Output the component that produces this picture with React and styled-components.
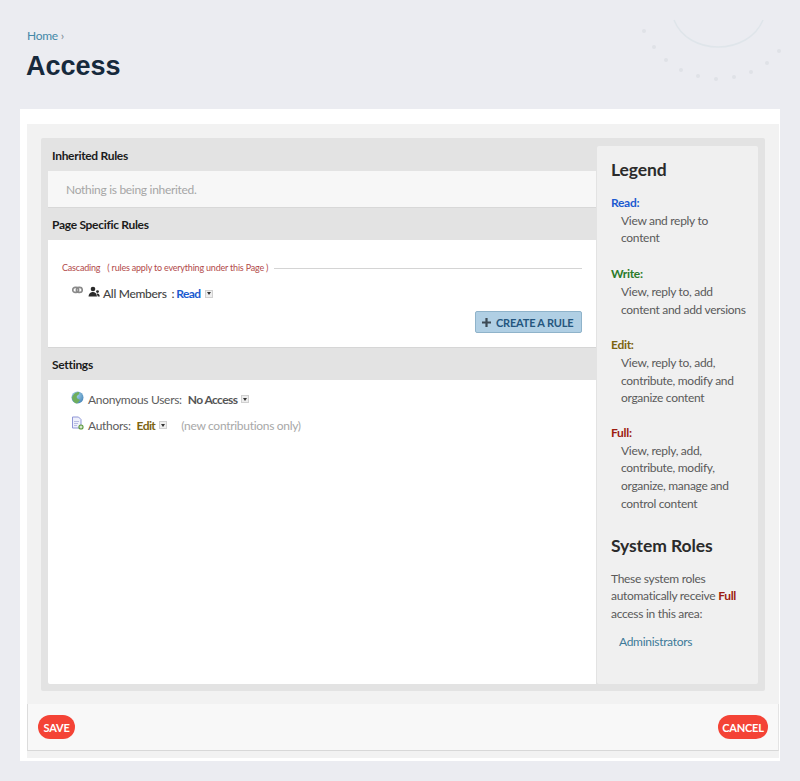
import React from 'react';
import styled, { createGlobalStyle } from 'styled-components';

const GlobalStyle = createGlobalStyle`
  html, body {
    margin: 0;
    padding: 0;
    background: #ebecf1;
    font-family: "Lato", "Noto Sans", sans-serif;
    letter-spacing: -0.3px;
    color: #555;
  }
`;

const Page = styled.div`
  position: relative;
  width: 800px;
  height: 781px;
  overflow: hidden;
  padding: 28px 20px 0;
  box-sizing: border-box;
`;

const Decoration = styled.svg`
  position: absolute;
  top: 0;
  right: 0;
  width: 200px;
  height: 90px;
`;

const Breadcrumb = styled.div`
  padding-left: 7px;
  font-size: 12px;
  line-height: 15px;
  color: #4488a8;
`;

const Separator = styled.span`
  color: #7a8a94;
  margin-left: 3px;
`;

const Title = styled.h1`
  margin: 6px 0 0 6px;
  font-family: "Liberation Sans", Arial, sans-serif;
  font-size: 27px;
  line-height: 34px;
  font-weight: 700;
  letter-spacing: 0;
  color: #16293c;
`;

const Sheet = styled.div`
  margin-top: 26px;
  height: 652px;
  box-sizing: border-box;
  background: #fff;
  padding: 15px 1px 3px 7px;
`;

const Backdrop = styled.div`
  height: 100%;
  background: #f2f2f2;
  padding-top: 14px;
  box-sizing: border-box;
`;

const Frame = styled.div`
  display: flex;
  margin-left: 14px;
  width: 724px;
  height: 553px;
  box-sizing: border-box;
  background: #e3e3e3;
  padding: 0 7px 7px;
  border-radius: 2px;
`;

const Main = styled.div`
  width: 548px;
  display: flex;
  flex-direction: column;
  flex-shrink: 0;
`;

const SectionHeader = styled.div`
  height: ${(p) => p.$height}px;
  box-sizing: border-box;
  display: flex;
  align-items: center;
  margin: 0 -7px;
  padding: ${(p) => p.$top || 0}px 0 0 11px;
  font-size: 12px;
  font-weight: 700;
  color: #1b1b1b;
  flex-shrink: 0;
`;

const InheritedBody = styled.div`
  height: 37px;
  box-sizing: border-box;
  background: #f7f7f7;
  border-bottom: 1px solid #d8d8d8;
  padding-left: 18px;
  display: flex;
  align-items: center;
  font-size: 12px;
  color: #a6a6a6;
`;

const RulesBody = styled.div`
  height: 108px;
  box-sizing: border-box;
  background: #fff;
  border-bottom: 1px solid #d6d6d6;
  padding: 21px 14px 0 14px;
`;

const Cascade = styled.div`
  display: flex;
  align-items: center;
  font-size: 9px;
  letter-spacing: -0.2px;
  line-height: 14px;
  color: #b24a4a;
`;

const CascadeNote = styled.span`
  margin-left: 7px;
`;

const CascadeLine = styled.span`
  flex: 1;
  height: 1px;
  margin-left: 6px;
  background: #d4d4d4;
`;

const RuleRow = styled.div`
  display: flex;
  align-items: center;
  margin: 11px 0 0 10px;
  font-size: 12px;
  font-weight: 500;
  color: #444;
`;

const RuleIcons = styled.span`
  display: flex;
  align-items: flex-start;
  gap: 5px;
  margin-top: -3px;
`;

const RuleName = styled.span`
  margin-left: 3px;
`;

const Colon = styled.span`
  margin: 0 2px 0 5px;
`;

const Level = styled.span`
  font-weight: 700;
  letter-spacing: -0.6px;
  color: ${(p) => p.$color};
`;

const Caret = styled.span`
  display: inline-flex;
  align-items: center;
  justify-content: center;
  width: 6px;
  height: 6px;
  margin-left: 4px;
  border: 1px solid #d0d0d0;
  background: #eee;
  &::after {
    content: '';
    border-left: 2px solid transparent;
    border-right: 2px solid transparent;
    border-top: 3px solid #333;
  }
`;

const ButtonRow = styled.div`
  display: flex;
  justify-content: flex-end;
  margin-top: 10px;
`;

const CreateButton = styled.button`
  display: flex;
  align-items: center;
  gap: 5px;
  height: 22px;
  width: 107px;
  padding: 0 0 0 6px;
  box-sizing: border-box;
  background: #b0cfe4;
  border: 1px solid #8fb3ca;
  border-radius: 2px;
  font-family: inherit;
  font-size: 11px;
  letter-spacing: -0.2px;
  font-weight: 700;
  color: #24567e;
`;

const SettingsBody = styled.div`
  flex: 1;
  background: #fff;
  padding: 10px 0 0 23px;
  border-radius: 0 0 0 2px;
`;

const SettingRow = styled.div`
  display: flex;
  align-items: center;
  height: 18px;
  margin-bottom: 8px;
  font-size: 12px;
  color: #5c5c5c;
`;

const SettingIcon = styled.span`
  display: flex;
  margin-top: -4px;
`;

const SettingLabel = styled.span`
  margin: 0 6px 0 4px;
`;

const Muted = styled.span`
  margin-left: 14px;
  color: #a8a8a8;
`;

const Sidebar = styled.aside`
  width: 161px;
  height: 538px;
  margin: 8px 0 0 1px;
  box-sizing: border-box;
  padding: 13px 10px 0 14px;
  background: #f0f0f0;
  border-radius: 2px;
  font-size: 12px;
  line-height: 17.7px;
  color: #5a5a5a;
`;

const SideTitle = styled.h2`
  margin: ${(p) => p.$top || 0}px 0 0;
  font-size: 17.5px;
  line-height: 22px;
  font-weight: 700;
  letter-spacing: -0.1px;
  color: #2b2b2b;
`;

const Term = styled.div`
  margin-top: ${(p) => p.$top}px;
  font-weight: 700;
  color: ${(p) => p.$color};
`;

const Definition = styled.div`
  padding-left: 10px;
`;

const RolesText = styled.p`
  margin: 13px 0 0;
`;

const FullWord = styled.span`
  font-weight: 700;
  color: #9c1c10;
`;

const RoleLink = styled.div`
  margin: 10px 0 0 8px;
  color: #3d7a99;
`;

const Footer = styled.div`
  display: flex;
  justify-content: space-between;
  align-items: center;
  height: 47px;
  margin-top: 13px;
  box-sizing: border-box;
  padding: 0 10px;
  background: #f8f8f8;
  border-left: 1px solid #dcdcdc;
  border-bottom: 1px solid #d8d8d8;
  border-right: 1px solid #e4e4e4;
`;

const RedButton = styled.button`
  height: 24px;
  width: ${(p) => p.$width}px;
  padding: 0;
  border: 0;
  border-radius: 12px;
  background: #f44336;
  color: #fff;
  font-family: inherit;
  font-size: 11px;
  letter-spacing: -0.2px;
  font-weight: 700;
`;

const LinkIcon = () => (
  <svg width="11" height="8" viewBox="0 0 12 8">
    <rect x="0.8" y="1.2" width="6.4" height="5.4" rx="2.7" fill="none" stroke="#8a8a8a" strokeWidth="1.8" />
    <rect x="4.8" y="1.2" width="6.4" height="5.4" rx="2.7" fill="none" stroke="#8a8a8a" strokeWidth="1.8" />
  </svg>
);

const MembersIcon = () => (
  <svg width="12" height="12" viewBox="0 0 12 12">
    <circle cx="5" cy="3" r="2.3" fill="#2b2b2b" />
    <path d="M0.5 10.5 C1 7 3 6 5 6 C7 6 8.5 7 9 10.5 Z" fill="#2b2b2b" />
    <circle cx="9.5" cy="5.6" r="1.4" fill="#2b2b2b" />
    <path d="M8.6 7.6 C10.5 7.2 11.6 8.6 11.8 10.5 L9.8 10.5 Z" fill="#2b2b2b" />
  </svg>
);

const GlobeIcon = () => (
  <svg width="13" height="13" viewBox="0 0 13 13">
    <defs>
      <radialGradient id="globe" cx="0.4" cy="0.3" r="0.8">
        <stop offset="0" stopColor="#a9d6ee" />
        <stop offset="1" stopColor="#3f7fb4" />
      </radialGradient>
    </defs>
    <circle cx="6.5" cy="6.5" r="6" fill="url(#globe)" />
    <path d="M1 7 C2 3 5 1 8 1 C9 3 7 4 6 5 C5 7 7 8 9 9 C8 11 6 12.5 5 12.4 C3 11.5 1.5 9.5 1 7 Z" fill="#6fae5c" />
  </svg>
);

const PageAddIcon = () => (
  <svg width="13" height="14" viewBox="0 0 13 14">
    <path d="M1.5 1 H7.5 L10 3.5 V12 H1.5 Z" fill="#eef0fb" stroke="#8f96d6" strokeWidth="1" />
    <path d="M3 5.5 H8 M3 7.5 H7 M3 9.5 H6" stroke="#a9aedd" strokeWidth="0.8" />
    <circle cx="10" cy="11" r="2.6" fill="#5c9a3c" />
    <path d="M10 9.5 V12.5 M8.5 11 H11.5" stroke="#fff" strokeWidth="1" />
  </svg>
);

const PlusIcon = () => (
  <svg width="9" height="9" viewBox="0 0 9 9">
    <path d="M4.5 0 V9 M0 4.5 H9" stroke="#3d4a55" strokeWidth="2.2" />
  </svg>
);

const dots = [
  [44, 31], [54, 47], [66, 60], [81, 70], [98, 76], [116, 79],
  [134, 77], [151, 72], [167, 63], [179, 51],
];

const legend = [
  { term: 'Read:', color: '#1c5bd0', top: 13, text: 'View and reply to content' },
  { term: 'Write:', color: '#2a7a2a', top: 18, text: 'View, reply to, add content and add versions' },
  { term: 'Edit:', color: '#7c6410', top: 18, text: 'View, reply to, add, contribute, modify and organize content' },
  { term: 'Full:', color: '#9c1c10', top: 17, text: 'View, reply, add, contribute, modify, organize, manage and control content' },
];

export default function App() {
  return (
    <>
      <GlobalStyle />
      <Page>
        <Decoration viewBox="0 0 200 90">
          <path d="M74 20 C 88 56, 148 56, 163 20" fill="none" stroke="#dfe5ea" strokeWidth="1.5" />
          {dots.map(([x, y]) => (
            <circle key={x} cx={x} cy={y} r="2" fill="#dfe2e7" />
          ))}
        </Decoration>
        <Breadcrumb>Home<Separator>›</Separator></Breadcrumb>
        <Title>Access</Title>
        <Sheet>
          <Backdrop>
            <Frame>
              <Main>
                <SectionHeader $height={33} $top={1}>Inherited Rules</SectionHeader>
                <InheritedBody>Nothing is being inherited.</InheritedBody>
                <SectionHeader $height={32}>Page Specific Rules</SectionHeader>
                <RulesBody>
                  <Cascade>
                    Cascading
                    <CascadeNote>( rules apply to everything under this Page )</CascadeNote>
                    <CascadeLine />
                  </Cascade>
                  <RuleRow>
                    <RuleIcons>
                      <LinkIcon />
                      <MembersIcon />
                    </RuleIcons>
                    <RuleName>All Members</RuleName>
                    <Colon>:</Colon>
                    <Level $color="#1c5bd0">Read</Level>
                    <Caret />
                  </RuleRow>
                  <ButtonRow>
                    <CreateButton><PlusIcon />CREATE A RULE</CreateButton>
                  </ButtonRow>
                </RulesBody>
                <SectionHeader $height={32}>Settings</SectionHeader>
                <SettingsBody>
                  <SettingRow>
                    <SettingIcon><GlobeIcon /></SettingIcon>
                    <SettingLabel>Anonymous Users:</SettingLabel>
                    <Level $color="#555">No Access</Level>
                    <Caret />
                  </SettingRow>
                  <SettingRow>
                    <SettingIcon><PageAddIcon /></SettingIcon>
                    <SettingLabel>Authors:</SettingLabel>
                    <Level $color="#7c6410">Edit</Level>
                    <Caret />
                    <Muted>(new contributions only)</Muted>
                  </SettingRow>
                </SettingsBody>
              </Main>
              <Sidebar>
                <SideTitle>Legend</SideTitle>
                {legend.map((l) => (
                  <React.Fragment key={l.term}>
                    <Term $color={l.color} $top={l.top}>{l.term}</Term>
                    <Definition>{l.text}</Definition>
                  </React.Fragment>
                ))}
                <SideTitle $top={22}>System Roles</SideTitle>
                <RolesText>
                  These system roles automatically receive <FullWord>Full</FullWord> access in this area:
                </RolesText>
                <RoleLink>Administrators</RoleLink>
              </Sidebar>
            </Frame>
            <Footer>
              <RedButton $width={37}>SAVE</RedButton>
              <RedButton $width={50}>CANCEL</RedButton>
            </Footer>
          </Backdrop>
        </Sheet>
      </Page>
    </>
  );
}
